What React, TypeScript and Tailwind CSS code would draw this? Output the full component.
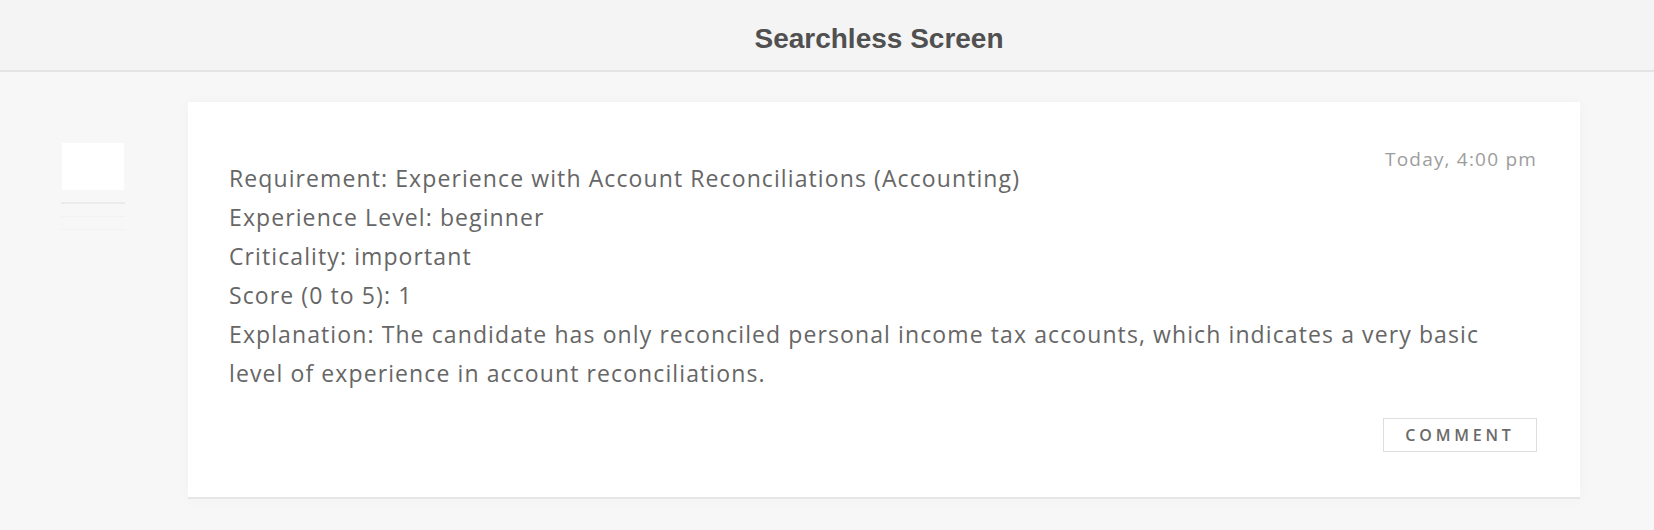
export default function App() {
  return (
    <div className="min-h-[530px] bg-[#f7f7f7] font-['Open_Sans',sans-serif]">
      <header className="h-[72px] flex items-center justify-center pl-[104px] pt-[8px] bg-[#f4f4f4] border-b-2 border-[#e4e4e4]">
        <h1 className="font-['Liberation_Sans',sans-serif] text-[28px] font-bold text-[#505050] leading-none">
          Searchless Screen
        </h1>
      </header>

      <main className="flex items-start pl-[61px] pt-[30px]">
        <div className="w-[64px] mt-[41px] shrink-0">
          <div className="mx-[1px] h-[47px] bg-white" />
          <div className="mt-[12px] h-[2px] bg-[#ebebeb]" />
          <div className="mt-[12px] h-[1px] bg-[#f2f2f2]" />
          <div className="mt-[12px] h-[1px] bg-[#f2f2f2]" />
        </div>

        <section className="ml-[63px] w-[1392px] shrink-0 bg-white border-b-2 border-[#e6e6e6] shadow-[0_0_12px_rgba(0,0,0,0.03)] pl-[41px] pr-[43px] pt-[46px] pb-[45px]">
          <div>
            <span className="float-right text-[19px] leading-[22px] tracking-[1.2px] text-[#9d9d9d] whitespace-nowrap">
              Today, 4:00 pm
            </span>
            <div className="pt-[11px] text-[23px] leading-[39px] tracking-[1.1px] text-[#666]">
              <p>Requirement: Experience with Account Reconciliations (Accounting)</p>
              <p>Experience Level: beginner</p>
              <p>Criticality: important</p>
              <p>Score (0 to 5): 1</p>
              <p>
                Explanation: The candidate has only reconciled personal income tax accounts, which indicates a very basic
                <br />
                level of experience in account reconciliations.
              </p>
            </div>
          </div>

          <div className="mt-[25px] flex justify-end">
            <button className="w-[154px] h-[34px] border border-[#dedede] bg-white text-[16px] font-semibold leading-none tracking-[3.8px] text-[#6a6a6a]">
              COMMENT
            </button>
          </div>
        </section>
      </main>
    </div>
  )
}
